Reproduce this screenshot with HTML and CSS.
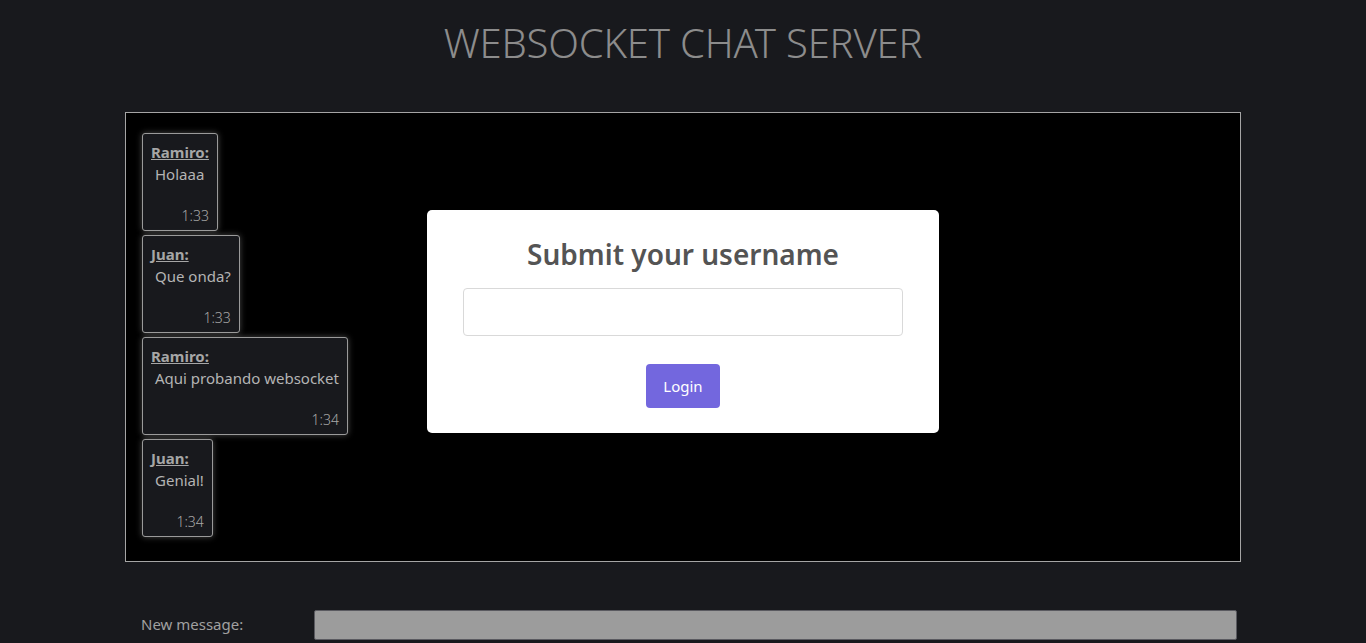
FILE: index.html
```html
<!DOCTYPE html>
<html lang="es">
<head>
<meta charset="utf-8">
<title>Websocket Chat Server</title>
<link rel="stylesheet" href="styles.css">
</head>
<body>
<h1 class="title">WEBSOCKET CHAT SERVER</h1>
<main class="chat">
  <div class="messages">
    <div class="msg"><span class="msg-user">Ramiro:</span><span class="msg-text">Holaaa</span><span class="msg-time">1:33</span></div>
    <div class="msg"><span class="msg-user">Juan:</span><span class="msg-text">Que onda?</span><span class="msg-time">1:33</span></div>
    <div class="msg"><span class="msg-user">Ramiro:</span><span class="msg-text">Aqui probando websocket</span><span class="msg-time">1:34</span></div>
    <div class="msg"><span class="msg-user">Juan:</span><span class="msg-text">Genial!</span><span class="msg-time">1:34</span></div>
  </div>
  <div class="modal">
    <h2 class="modal-title">Submit your username</h2>
    <input class="modal-input" type="text">
    <button class="modal-btn">Login</button>
  </div>
</main>
<form class="composer">
  <label class="composer-label">New message:</label>
  <input class="composer-input" type="text">
</form>
</body>
</html>
```

FILE: styles.css
```css
* { box-sizing: border-box; }
html, body { margin: 0; padding: 0; }
body {
  background: #18191d;
  font-family: "Noto Sans", "Open Sans", sans-serif;
  color: #aaa;
  height: 643px;
  overflow: hidden;
}
.title {
  margin: 0;
  padding-top: 19px;
  height: 112px;
  text-align: center;
  font-size: 40px;
  font-weight: 300;
  line-height: 48px;
  color: #8c8c8c;
  letter-spacing: -0.2px;
}
.chat {
  position: relative;
  margin: 0 125px;
  width: 1116px;
  height: 450px;
  background: #000;
  border: 1px solid #a5a5a5;
  padding: 20px 16px;
}
.messages {
  display: flex;
  flex-direction: column;
  align-items: flex-start;
  gap: 4px;
}
.msg {
  display: flex;
  flex-direction: column;
  align-items: stretch;
  height: 98px;
  padding: 8px 8px 4px 8px;
  background: #18191d;
  border: 1px solid #9a9a9a;
  border-radius: 3px;
  box-shadow: 0 0 6px rgba(255, 255, 255, 0.28);
}
.msg-user {
  font-size: 15px;
  font-weight: 700;
  line-height: 20px;
  text-decoration: underline;
  color: #a6a6a6;
}
.msg-text {
  margin-top: 0;
  margin-left: 4px;
  font-size: 15px;
  line-height: 24px;
  color: #b4b4b4;
  white-space: nowrap;
}
.msg-time {
  margin-top: 20px;
  text-align: right;
  font-size: 14px;
  font-weight: 300;
  line-height: 20px;
  color: #a8a8a8;
}
.modal {
  position: absolute;
  left: 301px;
  top: 97px;
  width: 512px;
  height: 223px;
  background: #fff;
  border-radius: 5px;
  padding: 24px 36px 0;
  display: flex;
  flex-direction: column;
  align-items: center;
}
.modal-title {
  margin: 0;
  font-size: 28px;
  font-weight: 600;
  line-height: 40px;
  color: #545454;
}
.modal-input {
  margin-top: 14px;
  width: 440px;
  height: 48px;
  border: 1px solid #d9d9d9;
  border-radius: 4px;
  background: #fff;
}
.modal-btn {
  margin-top: 28px;
  width: 74px;
  height: 44px;
  border: none;
  border-radius: 4px;
  background: #7367de;
  color: #fff;
  font-family: inherit;
  font-size: 15px;
}
.composer {
  display: flex;
  align-items: center;
  margin: 48px 129px 0 141px;
  height: 30px;
}
.composer-label {
  width: 173px;
  font-size: 15px;
  line-height: 20px;
  margin-top: -3px;
  color: #a0a0a0;
}
.composer-input {
  flex: 1;
  height: 30px;
  background: #9c9c9c;
  border: 1px solid #5a5a60;
  border-radius: 2px;
}
```
